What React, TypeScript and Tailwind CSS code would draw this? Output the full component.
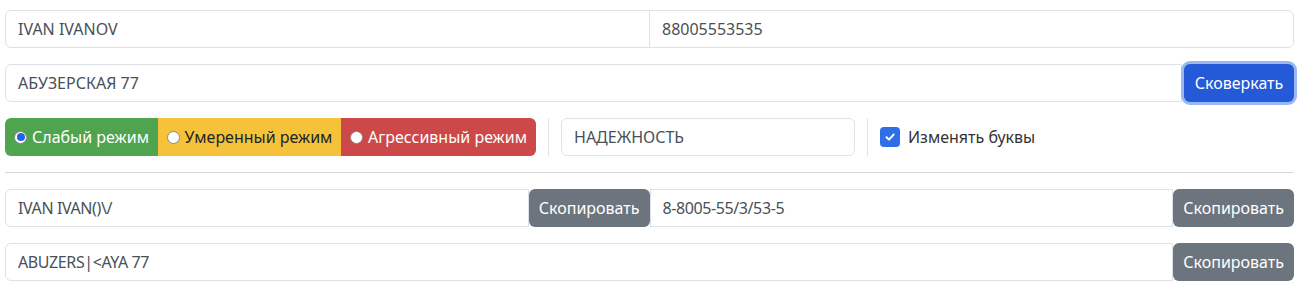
import { useState } from "react";

const inputCls =
  "h-[38px] min-w-0 flex-1 border border-[#dee2e6] bg-white px-3 text-[16px] text-[#495057] outline-none";

const copyBtn =
  "h-[38px] shrink-0 rounded-[6px] bg-[#6c757d] px-[10px] text-[16px] text-white";

const Radio = ({ checked }: { checked: boolean }) => (
  <span className="mr-[5px] inline-flex h-[13px] w-[13px] items-center justify-center rounded-full border border-[#8a8a8a] bg-white">
    {checked && <span className="h-[8px] w-[8px] rounded-full bg-[#1e66e6]" />}
  </span>
);

export default function App() {
  const [mode, setMode] = useState(0);
  const [changeLetters, setChangeLetters] = useState(true);

  const modes = [
    { label: "Слабый режим", cls: "w-[153px] bg-[#4fa44f] text-white rounded-l-[6px]" },
    { label: "Умеренный режим", cls: "w-[183px] bg-[#f6c23a] text-[#212529]" },
    { label: "Агрессивный режим", cls: "w-[195px] bg-[#cd4848] text-white rounded-r-[6px]" },
  ];

  return (
    <div className="bg-white px-[5px] pt-[10px] font-['Noto_Sans','Open_Sans',sans-serif] text-[#212529]">
      {/* имя + телефон */}
      <div className="mb-4 flex">
        <input className={`${inputCls} rounded-l-[6px]`} defaultValue="IVAN IVANOV" />
        <input className={`${inputCls} -ml-px rounded-r-[6px]`} defaultValue="88005553535" />
      </div>

      {/* адрес */}
      <div className="mb-4 flex items-center">
        <input className={`${inputCls} rounded-l-[6px]`} defaultValue="АБУЗЕРСКАЯ 77" />
        <button className="ml-[2px] h-[38px] w-[110px] shrink-0 rounded-[6px] bg-[#2459d8] text-[16px] text-white ring-[3px] ring-[#9cb8f2]">
          Сковеркать
        </button>
      </div>

      {/* режимы */}
      <div className="flex items-center">
        <div className="flex h-[38px]">
          {modes.map((m, i) => (
            <label
              key={m.label}
              onClick={() => setMode(i)}
              className={`flex cursor-pointer items-center justify-center text-[16px] ${m.cls}`}
            >
              <Radio checked={mode === i} />
              {m.label}
            </label>
          ))}
        </div>
        <div className="mx-[12px] h-[38px] w-px bg-[#e3e3e3]" />
        <input
          className="h-[38px] w-[294px] rounded-[6px] border border-[#dee2e6] px-3 text-[16px] text-[#495057] outline-none"
          defaultValue="НАДЕЖНОСТЬ"
        />
        <div className="mx-[12px] h-[38px] w-px bg-[#e3e3e3]" />
        <label
          className="flex cursor-pointer items-center gap-[8px] text-[16px] text-[#333]"
          onClick={() => setChangeLetters(!changeLetters)}
        >
          <span className="flex h-[20px] w-[20px] items-center justify-center rounded-[4px] bg-[#2f6fe6]">
            {changeLetters && (
              <svg width="12" height="12" viewBox="0 0 12 12" fill="none">
                <path d="M2.5 6.2 5 8.6 9.6 3.6" stroke="white" strokeWidth="2" strokeLinecap="round" strokeLinejoin="round" />
              </svg>
            )}
          </span>
          Изменять буквы
        </label>
      </div>

      <hr className="my-4 border-t border-[#d5d5d5]" />

      {/* результат */}
      <div className="mb-4 grid grid-cols-2">
        <div className="flex">
          <input className={`${inputCls} rounded-l-[6px] tracking-[-0.4px]`} defaultValue="IVAN IVAN()\/" />
          <button className={copyBtn}>Скопировать</button>
        </div>
        <div className="flex">
          <input className={`${inputCls} tracking-[-0.4px]`} defaultValue="8-8005-55/3/53-5" />
          <button className={copyBtn}>Скопировать</button>
        </div>
      </div>
      <div className="flex pb-[18px]">
        <input className={`${inputCls} rounded-l-[6px] tracking-[-0.4px]`} defaultValue="ABUZERS|<AYA 77" />
        <button className={copyBtn}>Скопировать</button>
      </div>
    </div>
  );
}
